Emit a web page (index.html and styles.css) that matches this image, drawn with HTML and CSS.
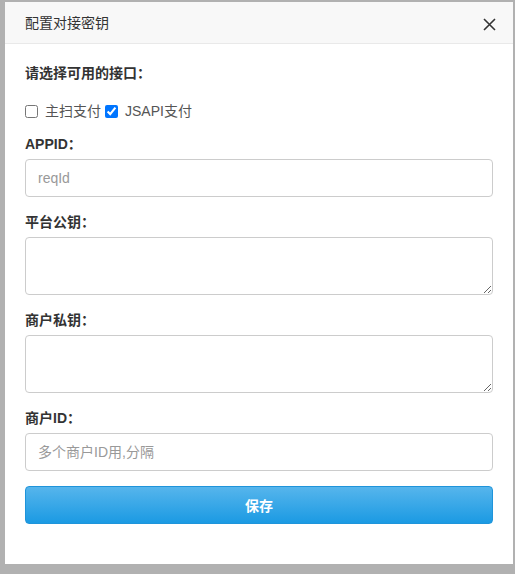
FILE: index.html
```html
<!DOCTYPE html>
<html lang="zh-CN">
<head>
<meta charset="utf-8">
<title>配置对接密钥</title>
<link rel="stylesheet" href="styles.css">
</head>
<body>
<div class="modal">
  <div class="modal-header">
    <span class="modal-title">配置对接密钥</span>
    <span class="close">
      <svg width="13" height="13" viewBox="0 0 13 13"><path d="M1 1L12 12M12 1L1 12" stroke="#333" stroke-width="1.6" fill="none"/></svg>
    </span>
  </div>
  <div class="modal-body">
    <div class="section-label">请选择可用的接口：</div>
    <div class="check-row">
      <label class="check"><input type="checkbox"><span>主扫支付</span></label>
      <label class="check"><input type="checkbox" checked><span>JSAPI支付</span></label>
    </div>
    <div class="form-group">
      <label class="field-label">APPID：</label>
      <input class="control" type="text" placeholder="reqId">
    </div>
    <div class="form-group">
      <label class="field-label">平台公钥：</label>
      <textarea class="control area"></textarea>
    </div>
    <div class="form-group">
      <label class="field-label">商户私钥：</label>
      <textarea class="control area"></textarea>
    </div>
    <div class="form-group">
      <label class="field-label">商户ID：</label>
      <input class="control" type="text" placeholder="多个商户ID用,分隔">
    </div>
    <button class="btn-save" type="button">保存</button>
  </div>
</div>
</body>
</html>
```

FILE: styles.css
```css
html, body {
  margin: 0;
  padding: 0;
  background: #b1b1b1;
  font-family: "Liberation Sans", "Noto Sans CJK SC", sans-serif;
  font-size: 14px;
  color: #333;
}
.modal {
  margin: 2px 2px 0 5px;
  width: 508px;
  height: 562px;
  background: #fff;
  box-sizing: border-box;
}
.modal-header {
  height: 42px;
  box-sizing: border-box;
  background: #f8f8f8;
  border-bottom: 1px solid #e9e9e9;
  display: flex;
  align-items: center;
  justify-content: space-between;
  padding: 0 17px 0 20px;
}
.modal-title {
  font-size: 14px;
  color: #333;
  line-height: 20px;
}
.close {
  display: flex;
  width: 13px;
  height: 13px;
  margin-top: 3px;
}
.modal-body {
  padding: 19px 20px 40px;
}
.section-label {
  font-weight: bold;
  line-height: 20px;
  margin-bottom: 18px;
}
.check-row {
  display: flex;
  align-items: center;
  gap: 4px;
  height: 20px;
  margin-bottom: 13px;
}
.check {
  display: inline-flex;
  align-items: center;
  gap: 7px;
  color: #555;
  line-height: 20px;
}
.check input {
  margin: 0;
  width: 13px;
  height: 13px;
}
.form-group {
  margin-bottom: 15px;
}
.field-label {
  display: block;
  font-weight: bold;
  line-height: 20px;
  margin-bottom: 5px;
}
.control {
  display: block;
  width: 100%;
  height: 38px;
  box-sizing: border-box;
  border: 1px solid #ccc;
  border-radius: 4px;
  padding: 0 12px;
  font-family: "Liberation Sans", "Noto Sans CJK SC", sans-serif;
  font-size: 14px;
  color: #333;
  background: #fff;
  outline: none;
}
.control::placeholder {
  color: #999;
}
.area {
  height: 58px;
  padding: 6px 12px;
  resize: vertical;
}
.btn-save {
  display: block;
  width: 100%;
  height: 38px;
  border: 1px solid #1f94da;
  border-radius: 4px;
  background: linear-gradient(to bottom, #56b5ec, #1b9ae3);
  color: #fff;
  font-family: "Liberation Sans", "Noto Sans CJK SC", sans-serif;
  font-size: 14px;
  font-weight: bold;
  cursor: pointer;
}
```
